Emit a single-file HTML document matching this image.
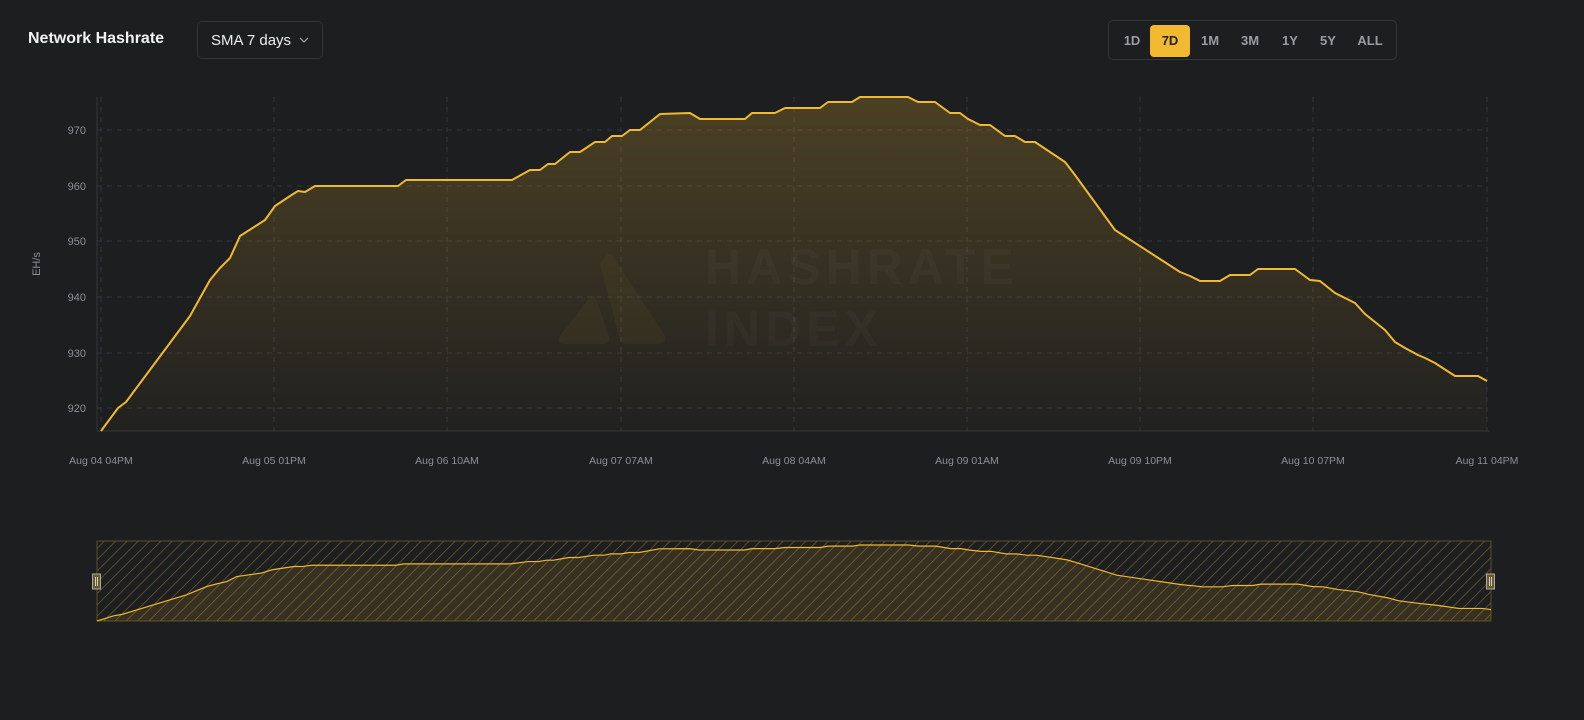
<!DOCTYPE html>
<html><head><meta charset="utf-8"><style>
html,body{margin:0;padding:0;background:#1d1e20;width:1584px;height:720px;overflow:hidden;font-family:"Liberation Sans",sans-serif}
.t{position:absolute;left:28px;top:30px;color:#f2f2f2;font-weight:bold;font-size:16px}
.dd{position:absolute;left:197px;top:21px;width:126px;height:38px;border:1px solid #34363a;border-radius:5px;box-sizing:border-box;color:#eee;font-size:15px;line-height:37px;padding-left:13px}
.rg{position:absolute;left:1108px;top:20px;width:289px;height:40px;border:1px solid #34363a;border-radius:5px;box-sizing:border-box}
.rg span{position:absolute;top:4px;height:32px;line-height:32px;font-size:13px;color:#9a9ca2;font-weight:bold;text-align:center;border-radius:4px}
</style></head><body>
<div class="t">Network Hashrate</div>
<div class="dd">SMA 7 days<svg style="position:absolute;left:101px;top:15px" width="10" height="7"><path d="M1 1 L5 5 L9 1" stroke="#999" stroke-width="1.3" fill="none"/></svg></div>
<div class="rg">
<span style="left:9px;width:28px">1D</span>
<span style="left:41px;width:40px;background:#f0b92f;color:#2a2210">7D</span>
<span style="left:86px;width:30px">1M</span>
<span style="left:126px;width:30px">3M</span>
<span style="left:166px;width:30px">1Y</span>
<span style="left:204px;width:30px">5Y</span>
<span style="left:244px;width:34px">ALL</span>
</div>
<svg width="1584" height="720" style="position:absolute;left:0;top:0" font-family="Liberation Sans, sans-serif">
<defs>
<linearGradient id="g" x1="0" y1="0" x2="0" y2="1"><stop offset="0" stop-color="#f0b92f" stop-opacity="0.22"/><stop offset="1" stop-color="#f0b92f" stop-opacity="0.02"/></linearGradient>
<pattern id="h" width="8" height="8" patternUnits="userSpaceOnUse" patternTransform="rotate(45)"><line x1="0" y1="0" x2="0" y2="8" stroke="#6b5a2a" stroke-width="1.5"/></pattern>
<path id="L" d="M101,431 L118,408 L126,402 L190,316 L200,298 L210,280 L220,268 L230,258 L240,236 L265,220 L275,206 L290,196 L298,191 L305,192 L315,186 L398,186 L406,180 L512,180 L530,170 L540,170 L548,164 L555,164 L570,152 L580,152 L595,142 L605,142 L612,136 L622,136 L630,130 L640,130 L660,114 L690,113 L700,119 L745,119 L752,113 L775,113 L785,108 L820,108 L828,102 L852,102 L860,97 L908,97 L918,102 L935,102 L950,113 L960,113 L968,119 L980,125 L990,125 L1005,136 L1015,136 L1025,142 L1035,142 L1065,162 L1075,175 L1115,230 L1180,272 L1190,276 L1200,281 L1220,281 L1230,275 L1250,275 L1258,269 L1295,269 L1310,280 L1320,281 L1335,293 L1355,303 L1365,314 L1385,330 L1395,342 L1405,348 L1418,355 L1425,358 L1435,363 L1455,376 L1478,376 L1487,381"/>
<path id="A" d="M101,431 L118,408 L126,402 L190,316 L200,298 L210,280 L220,268 L230,258 L240,236 L265,220 L275,206 L290,196 L298,191 L305,192 L315,186 L398,186 L406,180 L512,180 L530,170 L540,170 L548,164 L555,164 L570,152 L580,152 L595,142 L605,142 L612,136 L622,136 L630,130 L640,130 L660,114 L690,113 L700,119 L745,119 L752,113 L775,113 L785,108 L820,108 L828,102 L852,102 L860,97 L908,97 L918,102 L935,102 L950,113 L960,113 L968,119 L980,125 L990,125 L1005,136 L1015,136 L1025,142 L1035,142 L1065,162 L1075,175 L1115,230 L1180,272 L1190,276 L1200,281 L1220,281 L1230,275 L1250,275 L1258,269 L1295,269 L1310,280 L1320,281 L1335,293 L1355,303 L1365,314 L1385,330 L1395,342 L1405,348 L1418,355 L1425,358 L1435,363 L1455,376 L1478,376 L1487,381 L1487,431 Z"/>
</defs>
<g stroke="#33353a" stroke-dasharray="5,5" stroke-width="1">
<line x1="97" y1="130" x2="1487" y2="130"/><line x1="97" y1="186" x2="1487" y2="186"/><line x1="97" y1="241" x2="1487" y2="241"/><line x1="97" y1="297" x2="1487" y2="297"/><line x1="97" y1="353" x2="1487" y2="353"/><line x1="97" y1="408" x2="1487" y2="408"/>
<line x1="101" y1="97" x2="101" y2="431"/><line x1="274" y1="97" x2="274" y2="431"/><line x1="447" y1="97" x2="447" y2="431"/><line x1="621" y1="97" x2="621" y2="431"/><line x1="794" y1="97" x2="794" y2="431"/><line x1="967" y1="97" x2="967" y2="431"/><line x1="1140" y1="97" x2="1140" y2="431"/><line x1="1313" y1="97" x2="1313" y2="431"/><line x1="1487" y1="97" x2="1487" y2="431"/>
</g>
<line x1="97" y1="97" x2="97" y2="431" stroke="#34363a"/>
<line x1="97" y1="431" x2="1490" y2="431" stroke="#34363a"/>
<g fill="#8d8f94" font-size="11" text-anchor="end"><text x="86" y="134">970</text><text x="86" y="190">960</text><text x="86" y="245">950</text><text x="86" y="301">940</text><text x="86" y="357">930</text><text x="86" y="412">920</text></g>
<text x="40" y="264" fill="#8d8f94" font-size="11" text-anchor="middle" transform="rotate(-90 40 264)">EH/s</text>
<g fill="#8d8f94" font-size="10.5" text-anchor="middle"><text x="101" y="464">Aug 04 04PM</text><text x="274" y="464">Aug 05 01PM</text><text x="447" y="464">Aug 06 10AM</text><text x="621" y="464">Aug 07 07AM</text><text x="794" y="464">Aug 08 04AM</text><text x="967" y="464">Aug 09 01AM</text><text x="1140" y="464">Aug 09 10PM</text><text x="1313" y="464">Aug 10 07PM</text><text x="1487" y="464">Aug 11 04PM</text></g>
<use href="#A" fill="url(#g)"/>
<g fill="#f0b92f" fill-opacity="0.045">
<path d="M605,257 Q610,250 614,258 L664,334 Q668,344 656,344 L628,344 Q620,344 619,336 L600,264 Z"/>
<path d="M588,300 Q593,292 597,301 L609,336 Q611,344 603,344 L566,344 Q556,344 560,336 Z"/>
</g>
<g fill="#ffffff" fill-opacity="0.028" font-size="50" font-weight="bold" letter-spacing="5"><text x="705" y="284">HASHRATE</text><text x="705" y="346">INDEX</text></g>
<use href="#L" fill="none" stroke="#f0b92f" stroke-width="2" stroke-linejoin="round"/>
<rect x="97" y="541" width="1394" height="80" fill="url(#h)" stroke="#5a4d26"/>
<g transform="translate(97,522.9) scale(1.00577,0.2275) translate(-101,0)">
<use href="#A" fill="#f0b92f" fill-opacity="0.12"/>
<path vector-effect="non-scaling-stroke" fill="none" stroke="#f0b92f" stroke-width="1.2" d="M101,431 L118,408 L126,402 L190,316 L200,298 L210,280 L220,268 L230,258 L240,236 L265,220 L275,206 L290,196 L298,191 L305,192 L315,186 L398,186 L406,180 L512,180 L530,170 L540,170 L548,164 L555,164 L570,152 L580,152 L595,142 L605,142 L612,136 L622,136 L630,130 L640,130 L660,114 L690,113 L700,119 L745,119 L752,113 L775,113 L785,108 L820,108 L828,102 L852,102 L860,97 L908,97 L918,102 L935,102 L950,113 L960,113 L968,119 L980,125 L990,125 L1005,136 L1015,136 L1025,142 L1035,142 L1065,162 L1075,175 L1115,230 L1180,272 L1190,276 L1200,281 L1220,281 L1230,275 L1250,275 L1258,269 L1295,269 L1310,280 L1320,281 L1335,293 L1355,303 L1365,314 L1385,330 L1395,342 L1405,348 L1418,355 L1425,358 L1435,363 L1455,376 L1478,376 L1487,381"/>
</g>
<g><rect x="92.5" y="574" width="8" height="15" fill="#6b5a2a" stroke="#aaa"/><line x1="95.5" y1="577" x2="95.5" y2="586" stroke="#ccc"/><line x1="97.5" y1="577" x2="97.5" y2="586" stroke="#ccc"/>
<rect x="1486.5" y="574" width="8" height="15" fill="#6b5a2a" stroke="#aaa"/><line x1="1489.5" y1="577" x2="1489.5" y2="586" stroke="#ccc"/><line x1="1491.5" y1="577" x2="1491.5" y2="586" stroke="#ccc"/></g>
</svg>
</body></html>
